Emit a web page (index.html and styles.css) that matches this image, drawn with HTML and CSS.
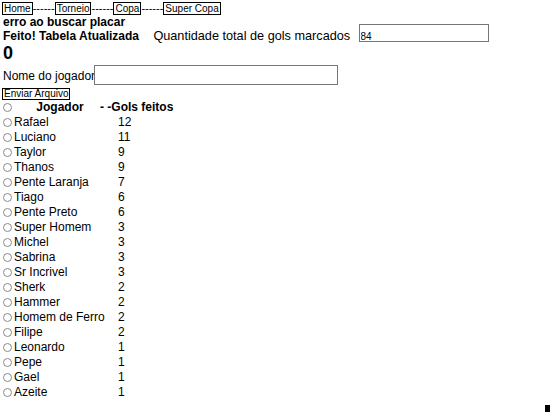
FILE: index.html
```html
<!DOCTYPE html>
<html lang="pt">
<head>
    <meta charset="UTF-8">
    <meta name="viewport" content="width=device-width, initial-scale=1.0">
    <title>Placar</title>
    <link rel="stylesheet" href="styles.css">
</head>
<body>
    <div class="nav">
        <button class="nav-btn">Home</button>------<button class="nav-btn">Torneio</button>------<button class="nav-btn">Copa</button>------<button class="nav-btn">Super Copa</button>
    </div>
    <div class="msg">erro ao buscar placar</div>
    <div class="total-row">
        <span class="msg">Feito! Tabela Atualizada</span>
        <label class="total-label" for="total">Quantidade total de gols marcados</label>
        <input class="total-input" type="text" id="total" value="84">
    </div>
    <div class="zero">0</div>
    <form class="form-player">
        <div class="player-row">
            <label for="jogador">Nome do jogador</label><input class="player-input" type="text" id="jogador">
        </div>
        <button type="button" class="send-btn">Enviar Arquivo</button>
    </form>
    <div class="table">
        <div class="row head">
            <input type="radio" name="sel" class="radio">
            <span class="name">Jogador</span>
            <span class="goals">- -Gols feitos</span>
        </div>
        <div class="row"><input type="radio" name="sel" class="radio"><span class="name">Rafael</span><span class="goals">12</span></div>
        <div class="row"><input type="radio" name="sel" class="radio"><span class="name">Luciano</span><span class="goals">11</span></div>
        <div class="row"><input type="radio" name="sel" class="radio"><span class="name">Taylor</span><span class="goals">9</span></div>
        <div class="row"><input type="radio" name="sel" class="radio"><span class="name">Thanos</span><span class="goals">9</span></div>
        <div class="row"><input type="radio" name="sel" class="radio"><span class="name">Pente Laranja</span><span class="goals">7</span></div>
        <div class="row"><input type="radio" name="sel" class="radio"><span class="name">Tiago</span><span class="goals">6</span></div>
        <div class="row"><input type="radio" name="sel" class="radio"><span class="name">Pente Preto</span><span class="goals">6</span></div>
        <div class="row"><input type="radio" name="sel" class="radio"><span class="name">Super Homem</span><span class="goals">3</span></div>
        <div class="row"><input type="radio" name="sel" class="radio"><span class="name">Michel</span><span class="goals">3</span></div>
        <div class="row"><input type="radio" name="sel" class="radio"><span class="name">Sabrina</span><span class="goals">3</span></div>
        <div class="row"><input type="radio" name="sel" class="radio"><span class="name">Sr Incrivel</span><span class="goals">3</span></div>
        <div class="row"><input type="radio" name="sel" class="radio"><span class="name">Sherk</span><span class="goals">2</span></div>
        <div class="row"><input type="radio" name="sel" class="radio"><span class="name">Hammer</span><span class="goals">2</span></div>
        <div class="row"><input type="radio" name="sel" class="radio"><span class="name">Homem de Ferro</span><span class="goals">2</span></div>
        <div class="row"><input type="radio" name="sel" class="radio"><span class="name">Filipe</span><span class="goals">2</span></div>
        <div class="row"><input type="radio" name="sel" class="radio"><span class="name">Leonardo</span><span class="goals">1</span></div>
        <div class="row"><input type="radio" name="sel" class="radio"><span class="name">Pepe</span><span class="goals">1</span></div>
        <div class="row"><input type="radio" name="sel" class="radio"><span class="name">Gael</span><span class="goals">1</span></div>
        <div class="row"><input type="radio" name="sel" class="radio"><span class="name">Azeite</span><span class="goals">1</span></div>
    </div>
    <div class="corner"></div>
</body>
</html>
```

FILE: styles.css
```css
body {
    margin: 0;
    padding: 2px 0 0 2px;
    font-family: "Liberation Sans", Arial, sans-serif;
    font-size: 12px;
    color: #000;
    background-color: #fff;
    min-height: 410px;
    position: relative;
}
.nav {
    height: 14px;
    line-height: 13px;
    font-size: 11px;
}
.nav-btn {
    font-family: "Liberation Sans", Arial, sans-serif;
    font-size: 10px;
    height: 13px;
    line-height: 11px;
    padding: 0 1px;
    border: 1px solid #000;
    background-color: #fff;
    color: #000;
    vertical-align: top;
}
.msg {
    font-weight: bold;
    line-height: 13.4px;
    margin-left: 1px;
}
.total-row {
    line-height: 13.4px;
}
.total-label {
    font-size: 12.7px;
    margin-left: 11px;
    margin-right: 5px;
}
.total-input {
    box-sizing: border-box;
    width: 130px;
    height: 18px;
    padding: 6px 2px 0 1px;
    border: 1px solid #767676;
    font-family: "Liberation Sans", Arial, sans-serif;
    font-size: 10px;
    line-height: 10px;
    margin: -5px 0 0 0;
    vertical-align: baseline;
}
.zero {
    font-size: 18px;
    font-weight: bold;
    line-height: 20px;
    margin-left: 1px;
}
.form-player {
    margin-top: 1.2px;
}
.player-row {
    display: flex;
    align-items: flex-end;
    margin-left: 1px;
}
.player-row label {
    line-height: 17px;
}
.player-input {
    width: 240px;
    height: 16px;
    border: 1px solid #767676;
    margin: 0 0 0 -1px;
    padding: 1px;
}
.send-btn {
    font-family: "Liberation Sans", Arial, sans-serif;
    font-size: 10px;
    height: 12px;
    line-height: 10px;
    padding: 0 1px;
    margin-top: 3px;
    border: 1px solid #000;
    background-color: #fff;
    color: #000;
    display: block;
}
.row {
    display: grid;
    grid-template-columns: 12px 92px auto;
    align-items: center;
    height: 15px;
}
.radio {
    appearance: none;
    width: 9px;
    height: 9px;
    margin: 0 0 0 1px;
    border: 1px solid #8a8a8a;
    border-radius: 50%;
}
.head .name {
    font-weight: bold;
    text-align: center;
}
.head .goals {
    font-weight: bold;
    padding-left: 0;
    margin-left: -6px;
}
.goals {
    padding-left: 12px;
}
.corner {
    position: absolute;
    right: 0;
    bottom: 0;
    width: 5px;
    height: 7px;
    background-color: #000;
}
```
